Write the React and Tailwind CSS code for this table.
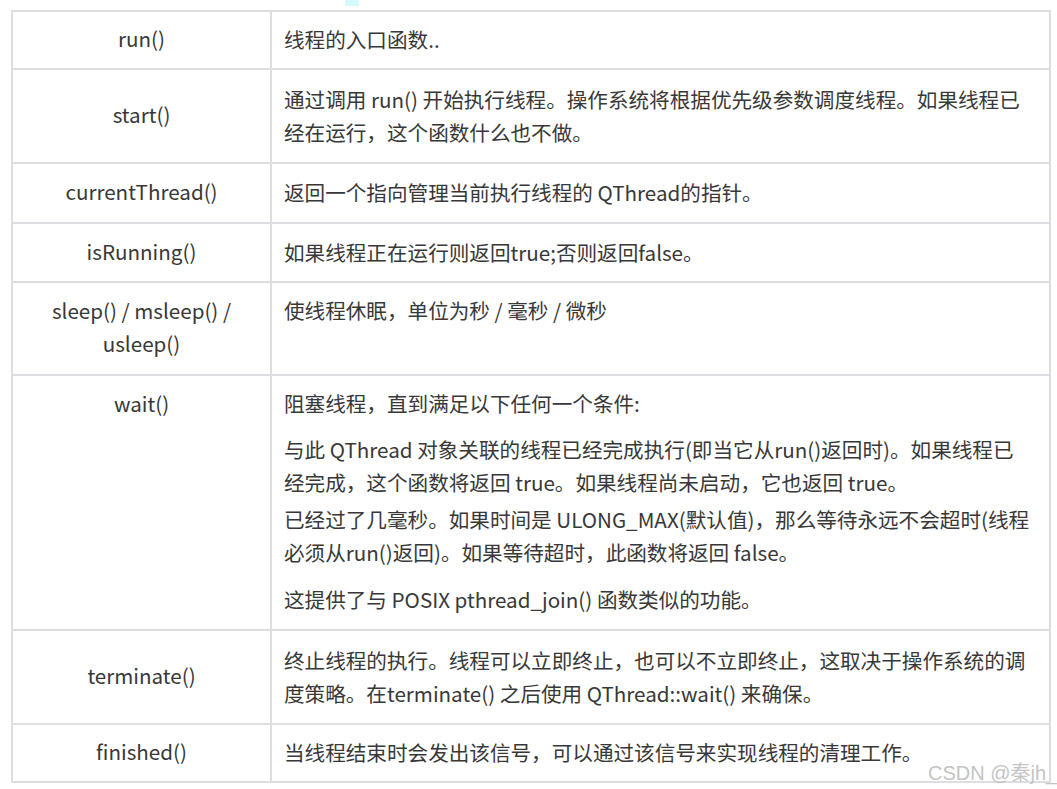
const font = { fontFamily: '"Noto Sans CJK SC", "Noto Sans", sans-serif' };

// each row: left label lines, right paragraphs, row height (incl. bottom border)
const rows = [
  { name: ["run()"], h: "h-[58px]", body: [["线程的入口函数.."]] },
  {
    name: ["start()"],
    h: "h-[94px]",
    body: [
      [
        "通过调用 run() 开始执行线程。操作系统将根据优先级参数调度线程。如果线程已",
        "经在运行，这个函数什么也不做。",
      ],
    ],
  },
  {
    name: ["currentThread()"],
    h: "h-[60px]",
    body: [["返回一个指向管理当前执行线程的 QThread的指针。"]],
  },
  {
    name: ["isRunning()"],
    h: "h-[59px]",
    body: [["如果线程正在运行则返回true;否则返回false。"]],
  },
];

const tailRows = [
  {
    name: ["terminate()"],
    h: "h-[94px]",
    body: [
      [
        "终止线程的执行。线程可以立即终止，也可以不立即终止，这取决于操作系统的调",
        "度策略。在terminate() 之后使用 QThread::wait() 来确保。",
      ],
    ],
  },
  {
    name: ["finished()"],
    h: "h-[58px]",
    body: [["当线程结束时会发出该信号，可以通过该信号来实现线程的清理工作。"]],
  },
];

function Lines({ lines }) {
  return lines.map((l, i) => (
    <span key={i}>
      {l}
      {i < lines.length - 1 && <br />}
    </span>
  ));
}

function Row({ row }) {
  return (
    <>
      <div
        className={`${row.h} flex items-center justify-center pb-[3px] text-center border-r-2 border-b-2 border-[#dedee2]`}
      >
        <p>
          <Lines lines={row.name} />
        </p>
      </div>
      <div
        className={`${row.h} flex flex-col justify-center pl-[12px] pr-1 pb-[1px] border-r-2 border-b-2 border-[#dedee2]`}
      >
        {row.body.map((p, i) => (
          <p key={i} className="whitespace-nowrap">
            <Lines lines={p} />
          </p>
        ))}
      </div>
    </>
  );
}

export default function App() {
  return (
    <div
      className="relative w-[1057px] h-[789px] bg-white overflow-hidden text-[20.6px] leading-[33px] text-[#383838]"
      style={font}
    >
      {/* stray cyan speck from the original capture */}
      <div className="absolute left-[345px] top-0 w-[14px] h-[6px] bg-[#d6fafd] rotate-3" />

      <div className="ml-[11px] mt-[10px] w-[1040px] grid grid-cols-[259px_779px] border-l-2 border-t-2 border-[#dedee2]">
        {rows.map((r, i) => (
          <Row key={i} row={r} />
        ))}

        {/* sleep row */}
        <div className="h-[93px] flex items-center justify-center pb-[3px] text-center border-r-2 border-b-2 border-[#dedee2]">
          <p>
            sleep() / msleep() /<br />
            usleep()
          </p>
        </div>
        <div className="h-[93px] pt-[11px] pl-[12px] border-r-2 border-b-2 border-[#dedee2]">
          <p>使线程休眠，单位为秒 / 毫秒 / 微秒</p>
        </div>

        {/* wait row */}
        <div className="h-[255px] pt-[11px] text-center border-r-2 border-b-2 border-[#dedee2]">
          <p>wait()</p>
        </div>
        <div className="h-[255px] pt-[11px] pl-[12px] pr-1 whitespace-nowrap border-r-2 border-b-2 border-[#dedee2]">
          <p>阻塞线程，直到满足以下任何一个条件:</p>
          <p className="mt-[13px]">
            与此 QThread 对象关联的线程已经完成执行(即当它从run()返回时)。如果线程已
            <br />
            经完成，这个函数将返回 true。如果线程尚未启动，它也返回 true。
          </p>
          <p className="mt-[4px]">
            已经过了几毫秒。如果时间是 ULONG_MAX(默认值)，那么等待永远不会超时(线程
            <br />
            必须从run()返回)。如果等待超时，此函数将返回 false。
          </p>
          <p className="mt-[14px]">这提供了与 POSIX pthread_join() 函数类似的功能。</p>
        </div>

        {tailRows.map((r, i) => (
          <Row key={i} row={r} />
        ))}
      </div>

      {/* watermark */}
      <div
        className="absolute left-[928px] top-[763px] text-[20px] leading-none text-[#c4c4c4] whitespace-nowrap"
        style={{ fontFamily: '"Liberation Sans", "Noto Sans CJK SC", sans-serif' }}
      >
        CSDN @秦jh_
      </div>
    </div>
  );
}
